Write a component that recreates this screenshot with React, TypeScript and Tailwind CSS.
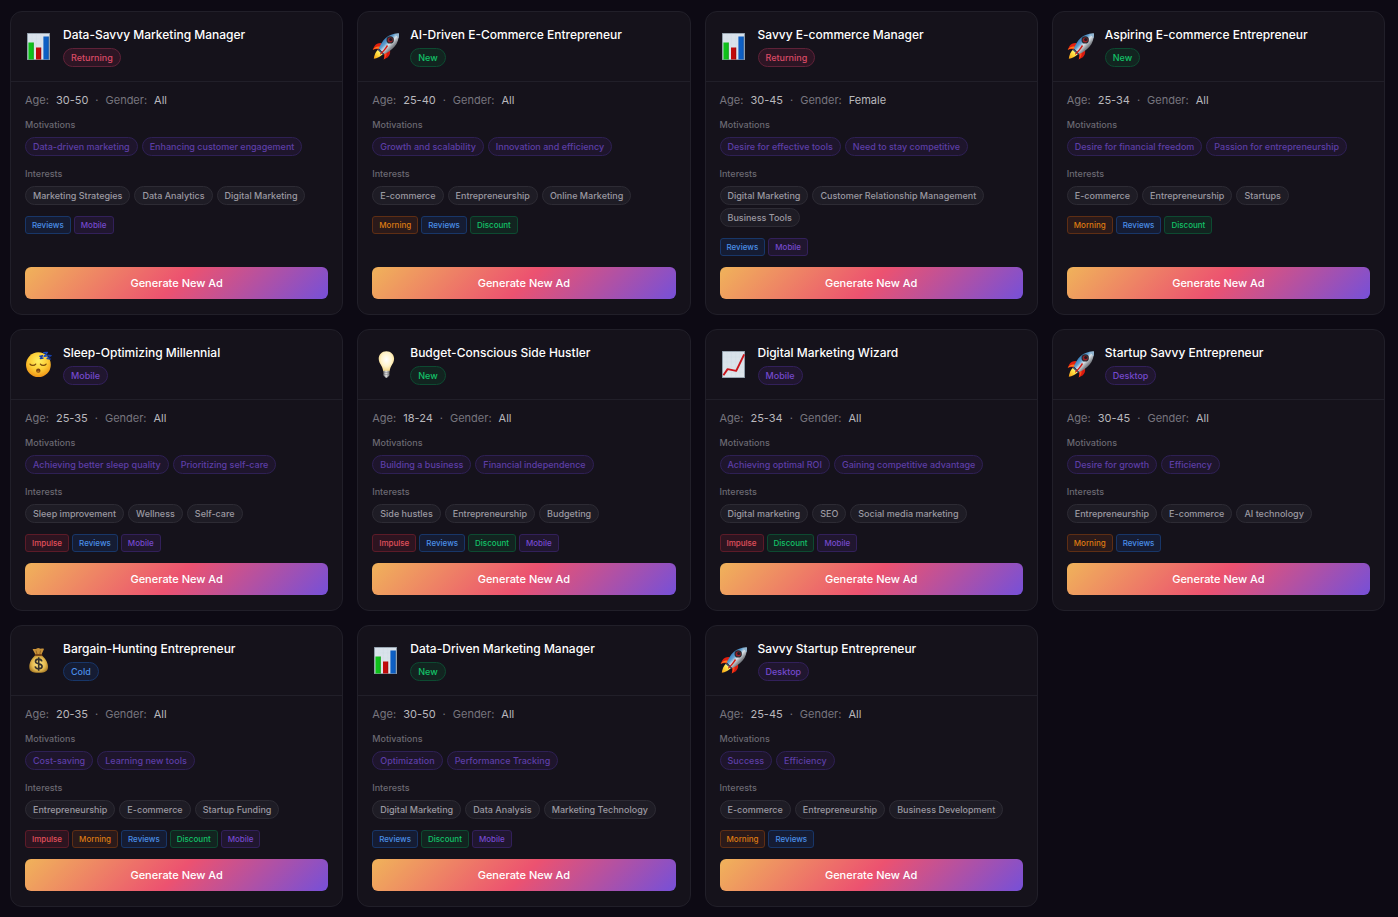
import { useId, type ReactNode } from "react";

type Icon = "bars" | "rocket" | "sleep" | "bulb" | "trend" | "money";
type Status = "Returning" | "New" | "Mobile" | "Desktop" | "Cold";
type Tag = "Impulse" | "Morning" | "Reviews" | "Discount" | "Mobile";

interface Persona {
  icon: Icon;
  name: string;
  status: Status;
  age: string;
  gender: string;
  motivations: string[];
  interests: string[];
  tags: Tag[];
}

const personas: Persona[] = [
  {
    icon: "bars",
    name: "Data-Savvy Marketing Manager",
    status: "Returning",
    age: "30-50",
    gender: "All",
    motivations: ["Data-driven marketing", "Enhancing customer engagement"],
    interests: ["Marketing Strategies", "Data Analytics", "Digital Marketing"],
    tags: ["Reviews", "Mobile"],
  },
  {
    icon: "rocket",
    name: "AI-Driven E-Commerce Entrepreneur",
    status: "New",
    age: "25-40",
    gender: "All",
    motivations: ["Growth and scalability", "Innovation and efficiency"],
    interests: ["E-commerce", "Entrepreneurship", "Online Marketing"],
    tags: ["Morning", "Reviews", "Discount"],
  },
  {
    icon: "bars",
    name: "Savvy E-commerce Manager",
    status: "Returning",
    age: "30-45",
    gender: "Female",
    motivations: ["Desire for effective tools", "Need to stay competitive"],
    interests: ["Digital Marketing", "Customer Relationship Management", "Business Tools"],
    tags: ["Reviews", "Mobile"],
  },
  {
    icon: "rocket",
    name: "Aspiring E-commerce Entrepreneur",
    status: "New",
    age: "25-34",
    gender: "All",
    motivations: ["Desire for financial freedom", "Passion for entrepreneurship"],
    interests: ["E-commerce", "Entrepreneurship", "Startups"],
    tags: ["Morning", "Reviews", "Discount"],
  },
  {
    icon: "sleep",
    name: "Sleep-Optimizing Millennial",
    status: "Mobile",
    age: "25-35",
    gender: "All",
    motivations: ["Achieving better sleep quality", "Prioritizing self-care"],
    interests: ["Sleep improvement", "Wellness", "Self-care"],
    tags: ["Impulse", "Reviews", "Mobile"],
  },
  {
    icon: "bulb",
    name: "Budget-Conscious Side Hustler",
    status: "New",
    age: "18-24",
    gender: "All",
    motivations: ["Building a business", "Financial independence"],
    interests: ["Side hustles", "Entrepreneurship", "Budgeting"],
    tags: ["Impulse", "Reviews", "Discount", "Mobile"],
  },
  {
    icon: "trend",
    name: "Digital Marketing Wizard",
    status: "Mobile",
    age: "25-34",
    gender: "All",
    motivations: ["Achieving optimal ROI", "Gaining competitive advantage"],
    interests: ["Digital marketing", "SEO", "Social media marketing"],
    tags: ["Impulse", "Discount", "Mobile"],
  },
  {
    icon: "rocket",
    name: "Startup Savvy Entrepreneur",
    status: "Desktop",
    age: "30-45",
    gender: "All",
    motivations: ["Desire for growth", "Efficiency"],
    interests: ["Entrepreneurship", "E-commerce", "AI technology"],
    tags: ["Morning", "Reviews"],
  },
  {
    icon: "money",
    name: "Bargain-Hunting Entrepreneur",
    status: "Cold",
    age: "20-35",
    gender: "All",
    motivations: ["Cost-saving", "Learning new tools"],
    interests: ["Entrepreneurship", "E-commerce", "Startup Funding"],
    tags: ["Impulse", "Morning", "Reviews", "Discount", "Mobile"],
  },
  {
    icon: "bars",
    name: "Data-Driven Marketing Manager",
    status: "New",
    age: "30-50",
    gender: "All",
    motivations: ["Optimization", "Performance Tracking"],
    interests: ["Digital Marketing", "Data Analysis", "Marketing Technology"],
    tags: ["Reviews", "Discount", "Mobile"],
  },
  {
    icon: "rocket",
    name: "Savvy Startup Entrepreneur",
    status: "Desktop",
    age: "25-45",
    gender: "All",
    motivations: ["Success", "Efficiency"],
    interests: ["E-commerce", "Entrepreneurship", "Business Development"],
    tags: ["Morning", "Reviews"],
  },
];

const statusStyles: Record<Status, string> = {
  Returning: "border-[#5f2238] bg-[#2d1524] text-[#d94a66]",
  New: "border-[#0d4a31] bg-[#122420] text-[#12c268]",
  Mobile: "border-[#32205a] bg-[#20162f] text-[#7549cc]",
  Desktop: "border-[#32205a] bg-[#20162f] text-[#7549cc]",
  Cold: "border-[#183668] bg-[#151c33] text-[#4a8ee6]",
};

const tagStyles: Record<Tag, string> = {
  Impulse: "border-[#5c1b28] bg-[#2d1420] text-[#e0505c]",
  Morning: "border-[#5e2e14] bg-[#2b1a1a] text-[#de7a12]",
  Reviews: "border-[#183668] bg-[#151c33] text-[#4a8ee6]",
  Discount: "border-[#0d4a31] bg-[#122420] text-[#12c268]",
  Mobile: "border-[#32205a] bg-[#20162f] text-[#7549cc]",
};

function Glyph({ children }: { children: ReactNode }) {
  return (
    <svg viewBox="0 0.5 28 28" className="size-7 shrink-0 overflow-visible" aria-hidden="true">
      {children}
    </svg>
  );
}

function ChartPaper({ id }: { id: string }) {
  return (
    <>
      <linearGradient id={id} x1="0" y1="0" x2="0" y2="1">
        <stop offset="0" stopColor="#d8e1eb" />
        <stop offset="1" stopColor="#dfe6ec" />
      </linearGradient>
      <rect x="2" y="0.5" width="23" height="27" fill="#8896a3" />
      <rect x="2.9" y="1.3" width="21.2" height="25.4" fill={`url(#${id})`} />
      <path
        d="M7.1 1.3v25.4M11.4 1.3v25.4M15.6 1.3v25.4M19.9 1.3v25.4M2.9 6.4h21.2M2.9 11.5h21.2M2.9 16.6h21.2M2.9 21.7h21.2"
        stroke="#cdd8e2"
        strokeWidth="0.3"
      />
    </>
  );
}

function BarsIcon() {
  const id = useId();
  return (
    <Glyph>
      <ChartPaper id={id} />
      <rect x="3.4" y="10" width="5.4" height="17" fill="#0fc11b" />
      <rect x="11" y="15" width="5.2" height="12" fill="#c00b0b" />
      <rect x="18.4" y="4" width="5.4" height="23" fill="#0d5fc4" />
      <path d="M8.3 10v17M15.8 15v12M23.3 4v23" stroke="#000000" strokeOpacity="0.2" strokeWidth="0.8" />
    </Glyph>
  );
}

function TrendIcon() {
  const id = useId();
  return (
    <Glyph>
      <ChartPaper id={id} />
      <path d="M3.4 24.8l4.2-6.2 8.600 1.800 8-16.600" fill="none" stroke="#c9141b" strokeWidth="1.9" strokeLinejoin="round" />
    </Glyph>
  );
}

function RocketIcon() {
  const id = useId();
  return (
    <Glyph>
      <defs>
        <linearGradient id={`${id}b`} x1="0.1" y1="0.1" x2="0.9" y2="0.9">
          <stop offset="0.1" stopColor="#1f68ad" />
          <stop offset="0.38" stopColor="#5f9dcd" />
          <stop offset="0.52" stopColor="#dbe3e9" />
          <stop offset="0.7" stopColor="#85898f" />
          <stop offset="1" stopColor="#36383d" />
        </linearGradient>
        <linearGradient id={`${id}f`} x1="1" y1="0" x2="0" y2="1">
          <stop offset="0" stopColor="#ffffff" />
          <stop offset="0.4" stopColor="#ffe94a" />
          <stop offset="1" stopColor="#f79a0c" />
        </linearGradient>
      </defs>
      <path d="M9.600 10.600c-3-.3-5.600.8-7.200 3.200L.7 17.200c2.700-.9 4.700-.9 6.700-.2z" fill="#e3200f" />
      <path d="M.7 17.200c2.500-1.300 4.500-1.400 6.500-1l1-1.800c-2.600-.9-5-.1-7.500 2.800z" fill="#ff7b1c" />
      <path d="M18 17.600c.6 3.200-.3 5.600-2.500 7.500L11.700 27c.9-2.600.7-4.800-.3-6.500z" fill="#d81a10" />
      <path d="M11.700 27c1.300-2.600 1.200-4.700.6-6.200l1.900-1.100c1 2.300.2 4.800-2.500 7.300z" fill="#ff4a1a" />
      <path d="M26.900 1c-5.200-.2-9.700 1.300-13.200 4.500-3.200 3-5.400 6.600-6.900 10.500l5.400 5.600c3.800-1.700 7.300-4 10.200-7.300C25.600 10.800 27 6.300 26.900 1z" fill={`url(#${id}b)`} />
      <path d="M22 1.500c1.700-.4 3.300-.6 4.900-.5.1 1.700 0 3.400-.4 5-1-2-2.500-3.500-4.500-4.500z" fill="#8fb4d0" />
      <circle cx="18.200" cy="7.400" r="3.700" fill="#2a2b30" />
      <circle cx="18.200" cy="7.400" r="2.500" fill="#9c2026" />
      <circle cx="18.700" cy="7.100" r="1.500" fill="#1d1a22" />
      <path d="M6.400 16.400l5.600 5.200-1.300 1.100-5.600-5.200z" fill="#46566a" />
      <path d="M5.600 17.500c-2 2.200-3.400 5-3.800 8.800 3.400-.6 6.400-1.800 8.700-4.200z" fill={`url(#${id}f)`} />
      <path d="M14.900 12.600l1.200.8c-2.600 4-5 6.500-7.700 8.800l-.5-.6c2.700-3 4.900-5.600 7-9z" fill="#d11b14" />
    </Glyph>
  );
}

function SleepIcon() {
  const id = useId();
  return (
    <Glyph>
      <radialGradient id={id} cx="0.5" cy="0.35" r="0.68">
        <stop offset="0" stopColor="#fff163" />
        <stop offset="0.55" stopColor="#fccb34" />
        <stop offset="1" stopColor="#ee8e14" />
      </radialGradient>
      <circle cx="13.400" cy="14.200" r="12.400" fill={`url(#${id})`} />
      <path d="M5 13.600c1.200 1.700 4.500 1.700 5.700 0M15.400 13.600c1.200 1.700 4.500 1.700 5.700 0" fill="none" stroke="#7a4a0c" strokeWidth="1.200" strokeLinecap="round" />
      <ellipse cx="13.300" cy="20.200" rx="2.200" ry="2.100" fill="#7a4310" />
      <ellipse cx="13.300" cy="20.900" rx="1.200" ry="0.900" fill="#b2701c" />
      <path d="M14.300 5.800l3.300-.7-2.300 3 3.200-.6" fill="none" stroke="#163fa8" strokeWidth="1.300" strokeLinejoin="round" />
      <path d="M18.200 2.300l4.200-.4-3.200 4 4-.5" fill="none" stroke="#1b4fc4" strokeWidth="1.400" strokeLinejoin="round" />
      <path d="M22.300 4.700l3.900.4-4.100 3 3.700.5" fill="none" stroke="#163fa8" strokeWidth="1.300" strokeLinejoin="round" />
    </Glyph>
  );
}

function BulbIcon() {
  const id = useId();
  return (
    <Glyph>
      <defs>
        <radialGradient id={`${id}g`} cx="0.5" cy="0.4" r="0.6">
          <stop offset="0" stopColor="#ffffff" />
          <stop offset="0.55" stopColor="#fff4cd" />
          <stop offset="1" stopColor="#f2d27c" />
        </radialGradient>
        <linearGradient id={`${id}s`} x1="0" y1="0" x2="1" y2="0">
          <stop offset="0" stopColor="#6d6d70" />
          <stop offset="0.45" stopColor="#e3e3e3" />
          <stop offset="1" stopColor="#707073" />
        </linearGradient>
      </defs>
      <path d="M14.400.8c-4.500 0-7.700 3.300-7.700 7.500 0 3.100 1.500 4.900 2.800 7.100 1 1.700 1.300 3.200 1.600 4.800.2.800.6 1.100 1.300 1.100h4c.7 0 1.100-.3 1.300-1.100.3-1.600.6-3.100 1.600-4.800 1.300-2.200 2.800-4 2.800-7.100 0-4.200-3.200-7.500-7.700-7.500z" fill={`url(#${id}g)`} />
      <path d="M11.400 20.300h6v4.200c0 1-1 1.600-1.700 1.800l-.5.900h-1.600l-.5-.9c-.7-.2-1.700-.8-1.700-1.800z" fill={`url(#${id}s)`} />
      <path d="M11.400 22h6M11.400 24h6" stroke="#77777c" strokeWidth="0.400" />
    </Glyph>
  );
}

function MoneyIcon() {
  const id = useId();
  return (
    <Glyph>
      <radialGradient id={id} cx="0.5" cy="0.5" r="0.6">
        <stop offset="0" stopColor="#ffe88a" />
        <stop offset="0.6" stopColor="#e5bb50" />
        <stop offset="1" stopColor="#9a6c1d" />
      </radialGradient>
      <path d="M7.600 2.700c1.500-.6 2.600.3 3.700-.5 1.400-.9 2.300-.9 3.700-.2 1.300.7 2.500-.5 4 .5l-2.800 6.300h-5.400z" fill="#c8923a" />
      <path d="M11 4l1.300 4.500M15.600 4l-1 4.500" stroke="#8a5b1b" strokeWidth="0.800" />
      <path d="M10.500 8.500h6c3.400 3 6.500 7.200 6.500 11.800 0 4.200-2.200 6-9.400 6s-9.300-1.800-9.300-6c0-4.600 2.800-8.800 6.200-11.800z" fill={`url(#${id})`} />
      <rect x="9.700" y="7.600" width="7.600" height="1.900" rx="0.900" fill="#7d4a18" />
      <path
        d="M16.900 14.900c-.4-1.500-1.500-2.300-3.200-2.300-1.900 0-3.200.9-3.200 2.400 0 3.300 6.600 1.400 6.600 4.800 0 1.600-1.400 2.500-3.400 2.500-1.900 0-3.200-.9-3.500-2.500M13.700 10.800v13.400"
        fill="none"
        stroke="#33302c"
        strokeWidth="1.600"
      />
    </Glyph>
  );
}

const icons: Record<Icon, () => ReactNode> = {
  bars: BarsIcon,
  rocket: RocketIcon,
  sleep: SleepIcon,
  bulb: BulbIcon,
  trend: TrendIcon,
  money: MoneyIcon,
};

function ChipGroup({ label, items, chipClass }: { label: string; items: string[]; chipClass: string }) {
  return (
    <section>
      <h3 className="text-[9px] leading-3 font-medium text-[#6b6972]">{label}</h3>
      <ul className="mt-1.5 flex flex-wrap gap-x-1 gap-y-[3px]">
        {items.map((item) => (
          <li key={item} className={`rounded-full border px-[7px] text-[9px] leading-[17px] font-medium ${chipClass}`}>
            {item}
          </li>
        ))}
      </ul>
    </section>
  );
}

function PersonaCard({ persona }: { persona: Persona }) {
  const PersonaIcon = icons[persona.icon];
  return (
    <article className="flex flex-col rounded-xl border border-[#211f29] bg-[#15121b]">
      <header className="flex items-center gap-2.5 border-b border-[#211f29] p-3.5">
        <PersonaIcon />
        <div className="flex min-w-0 flex-col items-start gap-1">
          <h2 className="text-[12px] leading-[18px] font-medium text-white">{persona.name}</h2>
          <span className={`rounded-full border px-[7px] text-[9px] leading-[17px] font-medium ${statusStyles[persona.status]}`}>
            {persona.status}
          </span>
        </div>
      </header>
      <div className="flex grow flex-col px-3.5 pt-2.5 pb-[15px]">
        <dl className="flex items-center gap-[7px] text-[11px] leading-4">
          <dt className="text-[#77757e]">Age:</dt>
          <dd className="text-[#b9b8bd]">{persona.age}</dd>
          <span className="text-[#77757e]" aria-hidden="true">
            ·
          </span>
          <dt className="text-[#77757e]">Gender:</dt>
          <dd className="text-[#b9b8bd]">{persona.gender}</dd>
        </dl>
        <div className="mt-[11px] flex flex-col gap-3">
          <ChipGroup
            label="Motivations"
            items={persona.motivations}
            chipClass="border-[#2e2054] bg-[#1e152c] text-[#5d3ea6]"
          />
          <ChipGroup
            label="Interests"
            items={persona.interests}
            chipClass="border-[#2d2b34] bg-[#1e1c25] text-[#9b99a1]"
          />
        </div>
        <ul className="my-[11px] flex flex-wrap gap-[3px]">
          {persona.tags.map((tag) => (
            <li key={tag} className={`rounded-[3px] border px-1.5 text-[8px] leading-4 font-medium ${tagStyles[tag]}`}>
              {tag}
            </li>
          ))}
        </ul>
        <button
          type="button"
          className="mt-auto h-8 w-full cursor-pointer rounded-md bg-[linear-gradient(135deg,#f0b35a_0%,#ec5270_50%,#7650d8_100%)] text-[11px] font-medium text-white"
        >
          Generate New Ad
        </button>
      </div>
    </article>
  );
}

export default function App() {
  return (
    <main className="min-h-screen bg-[#0d0a14] pt-[11px] pr-[13px] pb-2.5 pl-2.5 font-[Inter,sans-serif]">
      <div className="grid grid-cols-1 gap-3.5 sm:grid-cols-2 lg:grid-cols-4">
        {personas.map((persona) => (
          <PersonaCard key={persona.name} persona={persona} />
        ))}
      </div>
    </main>
  );
}
